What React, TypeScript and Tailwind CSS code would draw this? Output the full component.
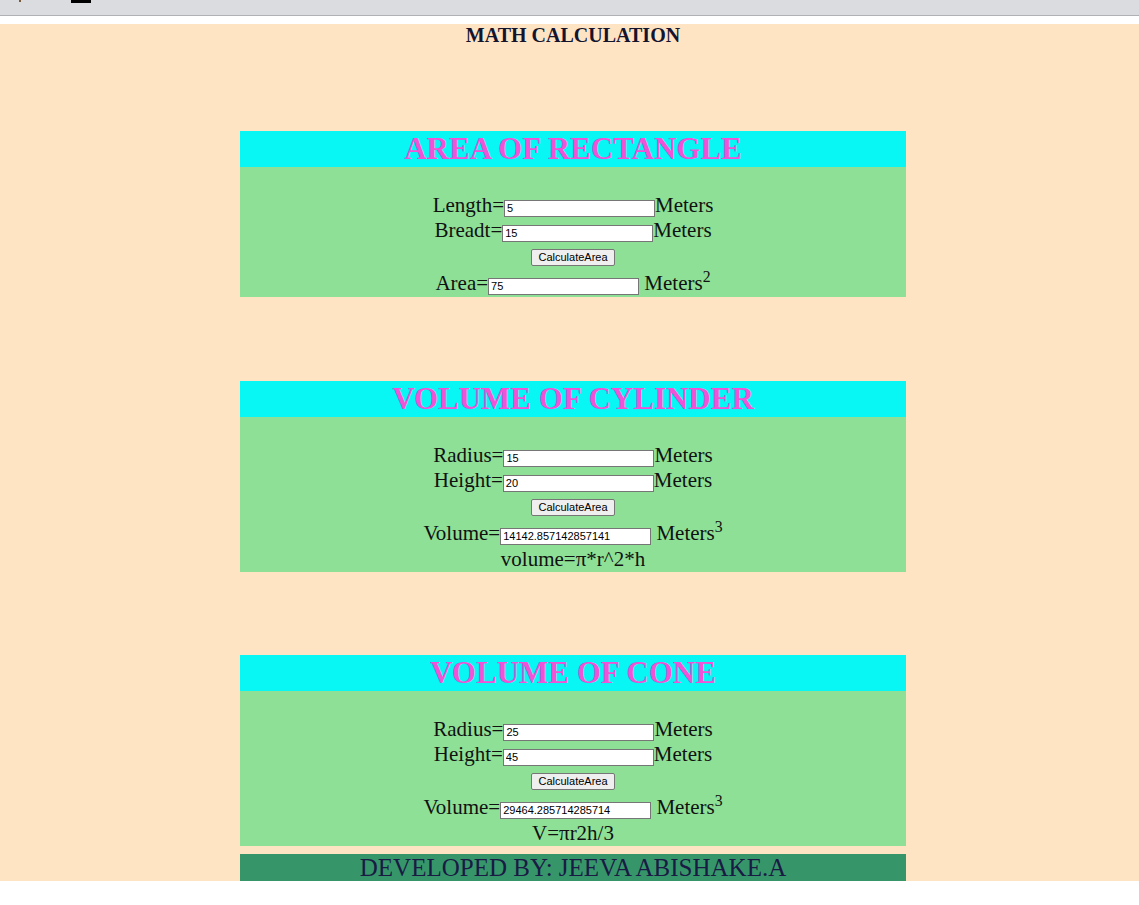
import React from "react";

const serif = { fontFamily: '"Liberation Serif", "Times New Roman", serif' };

function Field({ label, value, unit, sup }: { label: string; value: string; unit: string; sup?: string }) {
  return (
    <div className="leading-[25px] h-[25px] whitespace-nowrap">
      {label}
      <input
        readOnly
        value={value}
        className="w-[151px] h-[17px] px-[2px] bg-white border border-[#767676] text-[11px] text-black font-['Liberation_Sans',Arial,sans-serif] align-baseline outline-none"
      />
      {sup ? (
        <>
          {" "}
          {unit}
          <sup>{sup}</sup>
        </>
      ) : (
        unit
      )}
    </div>
  );
}

function CalcButton() {
  return (
    <div className="h-[27px] pt-[6px] flex justify-center">
      <button className="h-[17px] px-[6px] bg-[#efefef] border border-[#767676] rounded-[2px] text-[11px] leading-[13px] text-black font-['Liberation_Sans',Arial,sans-serif]">
        CalculateArea
      </button>
    </div>
  );
}

function Card({ title, children }: { title: string; children: React.ReactNode }) {
  return (
    <section className="w-[666px] mx-auto">
      <h2 className="h-[36px] bg-[#08f7f4] text-center text-[31px] leading-[36px] font-bold text-[#ef53d6]" style={serif}>
        {title}
      </h2>
      <div className="bg-[#8ee096] pt-[26px] text-center text-[21px] text-[#111]" style={serif}>
        {children}
      </div>
    </section>
  );
}

export default function App() {
  return (
    <div className="min-h-[905px] bg-white">
      <div className="h-[16px] bg-[#dadce0] border-b border-[#b0b0b6] relative">
        <div className="absolute left-[71px] top-0 w-[20px] h-[3px] bg-black" />
        <div className="absolute left-[19px] top-0 w-[2px] h-[2px] bg-[#7a5a3a]" />
      </div>
      <div className="h-[8px] bg-white" />
      <main className="bg-[#ffe4c4] h-[857px] pl-[7px] flex flex-col">
        <h1 className="text-center text-[20px] leading-[22px] font-bold text-[#14142e] h-[23px]" style={serif}>
          MATH CALCULATION
        </h1>
        <div className="mt-[84px]">
          <Card title="AREA OF RECTANGLE">
            <Field label="Length=" value="5" unit="Meters" />
            <Field label="Breadt=" value="15" unit="Meters" />
            <CalcButton />
            <div className="h-[27px] pt-[1px]">
              <Field label="Area=" value="75" unit="Meters" sup="2" />
            </div>
          </Card>
        </div>
        <div className="mt-[84px]">
          <Card title="VOLUME OF CYLINDER">
            <Field label="Radius=" value="15" unit="Meters" />
            <Field label="Height=" value="20" unit="Meters" />
            <CalcButton />
            <div className="h-[27px] pt-[1px]">
              <Field label="Volume=" value="14142.857142857141" unit="Meters" sup="3" />
            </div>
            <div className="h-[25px] leading-[25px]">volume=π*r^2*h</div>
          </Card>
        </div>
        <div className="mt-[83px]">
          <Card title="VOLUME OF CONE">
            <Field label="Radius=" value="25" unit="Meters" />
            <Field label="Height=" value="45" unit="Meters" />
            <CalcButton />
            <div className="h-[27px] pt-[1px]">
              <Field label="Volume=" value="29464.285714285714" unit="Meters" sup="3" />
            </div>
            <div className="h-[25px] leading-[25px]">V=πr2h/3</div>
          </Card>
        </div>
        <footer
          className="mt-[8px] w-[666px] mx-auto h-[27px] bg-[#36966a] text-center text-[25px] leading-[27px] text-[#1a1a44]"
          style={serif}
        >
          DEVELOPED BY: JEEVA ABISHAKE.A
        </footer>
      </main>
    </div>
  );
}
